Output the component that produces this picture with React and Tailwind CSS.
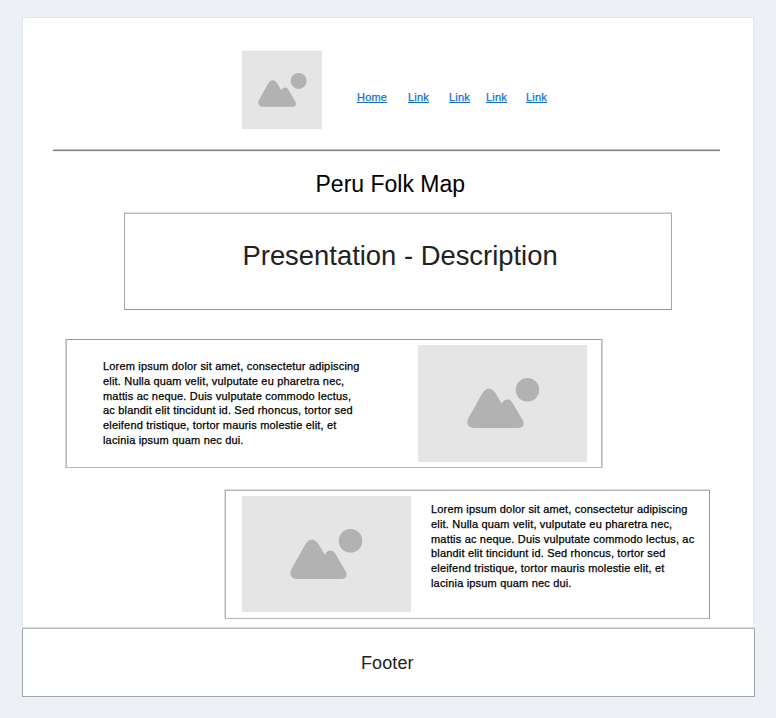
function Mountains({ className }) {
  return (
    <svg viewBox="0 0 72.5 50" preserveAspectRatio="none" className={className} fill="#b2b2b2" aria-hidden="true">
      <circle cx="60.5" cy="11.8" r="11.8" />
      <path d="M7 50C1.5 50-1.2 45.3 1.2 40.6L15.2 15.6C18.5 9 25.200 9 28.800 15.600L34.800 25.700C37.300 20.500 42.500 20.200 45.200 24.400L55.800 42.500C57.800 46.200 56 50 52 50Z" />
    </svg>
  );
}

function Links() {
  return (
    <nav className="flex pt-[38px] text-[11px] leading-[16px] tracking-[0.2px] text-[#0c6fdc] [-webkit-text-stroke:0.25px] [&_a]:underline">
      <a className="w-[51px]">Home</a>
      <a className="w-[41px]">Link</a>
      <a className="w-[37px]">Link</a>
      <a className="w-[40px]">Link</a>
      <a>Link</a>
    </nav>
  );
}

function Lines({ lines, className }) {
  return (
    <p className={className}>
      {lines.map((line) => (
        <span key={line} className="block whitespace-nowrap">{line}</span>
      ))}
    </p>
  );
}

const first = [
  "Lorem ipsum dolor sit amet, consectetur adipiscing",
  "elit. Nulla quam velit, vulputate eu pharetra nec,",
  "mattis ac neque. Duis vulputate commodo lectus,",
  "ac blandit elit tincidunt id. Sed rhoncus, tortor sed",
  "eleifend tristique, tortor mauris molestie elit, et",
  "lacinia ipsum quam nec dui.",
];

const second = [
  "Lorem ipsum dolor sit amet, consectetur adipiscing",
  "elit. Nulla quam velit, vulputate eu pharetra nec,",
  "mattis ac neque. Duis vulputate commodo lectus, ac",
  "blandit elit tincidunt id. Sed rhoncus, tortor sed",
  "eleifend tristique, tortor mauris molestie elit, et",
  "lacinia ipsum quam nec dui.",
];

export default function App() {
  return (
    <div className="h-[718px] w-[776px] overflow-hidden bg-[#edf1f6] pl-[22px] pt-[17px] font-['Liberation_Sans',Arial,sans-serif] text-black">
      <main className="h-[611px] w-[732px] border-x border-t border-[#e2e7eb] bg-white">
        <header className="flex h-[131px] pl-[219px] pt-[33px]">
          <div className="mr-[35px] h-[78px] w-[80px] bg-[#e5e5e5] pl-[16px] pt-[22px] shadow-[0_-1px_#f4f4f4]">
            <Mountains className="h-[33.700px] w-[48.700px]" />
          </div>
          <Links />
        </header>
        <hr className="ml-[30px] h-[2px] w-[667px] border-t border-b border-t-[#bdbdbd] border-b-[#858585] shadow-[0_1px_#efefef]" />
        <h1 className="ml-[292.500px] mt-[19px] h-[28px] whitespace-nowrap text-[23px] leading-[28px]">Peru Folk Map</h1>
        <section className="ml-[101px] mt-[15px] h-[97px] w-[548px] border border-[#a8a8a8] border-t-[#bdbdbd] border-b-[#969696] pl-[117.500px] pt-[24px] shadow-[0_-1px_#dedede]">
          <h2 className="whitespace-nowrap text-[27.400px] leading-[36px] text-[#222]">Presentation - Description</h2>
        </section>
        <section className="ml-[43px] mt-[29px] flex h-[129px] w-[536px] border border-[#b9b9b9] border-t-[#969696] pl-[36px] pt-[5px] shadow-[-1px_0_#d4d4d4,1px_0_#d4d4d4]">
          <Lines lines={first} className="w-[315.400px] shrink-0 pt-[14px] text-[11px] leading-[14.750px] tracking-[0.180px] [-webkit-text-stroke:0.25px]" />
          <div className="h-[117px] w-[169px] shrink-0 bg-[#e5e5e5] pl-[48.200px] pt-[33.400px]">
            <Mountains className="h-[50px] w-[72.500px]" />
          </div>
        </section>
        <section className="ml-[202px] mt-[22px] flex h-[129px] w-[485px] border border-[#b4b4b4] border-r-[#969696] pl-[16px] pt-[5px] shadow-[-1px_-1px_#dcdcdc]">
          <div className="mr-[20.500px] h-[116px] w-[168.500px] shrink-0 bg-[#e5e5e5] pl-[48px] pt-[33px]">
            <Mountains className="h-[50px] w-[72.500px]" />
          </div>
          <Lines lines={second} className="pt-[6px] text-[11px] leading-[14.750px] tracking-[0.180px] [-webkit-text-stroke:0.25px]" />
        </section>
      </main>
      <footer className="flex h-[69px] w-[733px] border border-[#a3a6a9] border-t-[#b8b8b8] bg-white pl-[338px] pt-[22px] text-[18px] leading-[24px] tracking-[0.1px] text-[#222] shadow-[0_-1px_#dedede]">
        Footer
      </footer>
    </div>
  );
}
